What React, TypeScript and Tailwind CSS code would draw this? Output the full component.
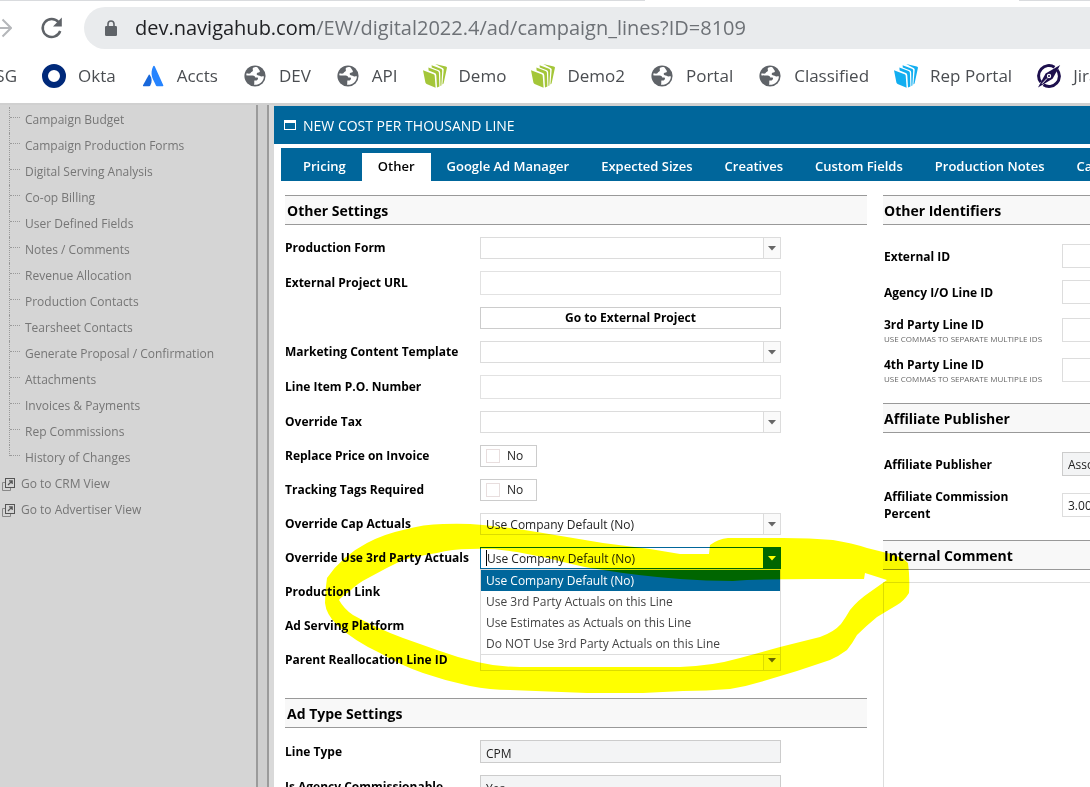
import { useState, type ReactNode } from 'react'

const ink = 'text-[#222]'

function Globe() {
  return (
    <svg viewBox="0 0 24 24" className="size-6" aria-hidden="true">
      <circle cx="12" cy="12" r="10.6" fill="#5f6368" />
      <path
        fill="#fff"
        d="M3.2 11.2 C5 11.6 7.6 11.4 9.6 11.4 C11.4 11.4 12.2 12.4 12.2 13.6 H14.4 C15.4 13.8 15.2 16 13.6 16.4 L11.4 16.6 C11 18 11.6 18.8 11 20.8 C16 21.4 20.8 17.6 20.9 12.4 C19.8 12 18.8 13 17.6 12.2 C16.4 11.4 14.8 11.8 14 10.8 C13.2 9.6 14 8.4 15.8 8.4 C17 8.4 17.2 7 16.4 6.2 L14.6 3.4 C12 2.6 10 3.4 9.6 5 C10.4 6.6 9.8 7.4 8.4 8 C7.6 8.4 8 9.4 6.8 9.6 C5.6 9.8 4.6 9.4 3.6 9.2Z"
      />
    </svg>
  )
}

function Books({ className }: { className: string }) {
  return (
    <svg viewBox="0 0 24 24" className={`size-6 ${className}`} fill="currentColor" aria-hidden="true">
      <path d="M0 6.2 L10.6 10.2 Q11.6 10.6 11.7 11.8 L12.6 23.8 L3.6 20 Q2.6 19.6 2.4 18.6Z" />
      <path d="M5.4 3.4 L14.6 7 Q15.8 7.5 15.9 8.8 L16.4 22.6 L14 23.6 L13.3 11.2 Q13.2 9.6 11.8 9 L5.6 6.4Z" />
      <path d="M8.6 1.2 L18 4.8 Q19.3 5.3 19.2 6.6 L18.4 21.4 L17.4 22 L17.2 8.4 Q17.1 6.8 15.8 6.2 L8.8 3.4Z" />
      <path d="M12.2 0 L22.8 2.4 Q24.2 2.8 23.9 4 L20.6 19.6 L19.4 20.4 L20.7 5.8 Q20.8 4.5 19.6 4Z" />
    </svg>
  )
}

function Okta() {
  return (
    <svg viewBox="0 0 24 24" className="size-6" aria-hidden="true">
      <circle cx="12" cy="12" r="9" fill="none" stroke="#00297a" strokeWidth="6" />
    </svg>
  )
}

function Atlassian() {
  return (
    <svg viewBox="0 0 24 24" className="size-6" aria-hidden="true">
      <path fill="#2684ff" d="M12.2 2.2 C12.6 1.4 13.4 1.5 13.7 2.2 L22.3 21.2 Q22.6 22.2 21.6 22.2 H16 Q15.2 22.2 14.9 21.4 C14 19 11.8 16 11 12.8 C10.1 9 10.6 5.6 12.2 2.2Z" />
      <path fill="#1868db" d="M7.8 10.8 Q8.2 10.2 8.7 10.8 C11.2 14 11.2 18 9.3 21.5 Q8.9 22.2 8.2 22.2 H2.6 Q1.6 22.2 2 21.2Z" />
    </svg>
  )
}

function Compass() {
  return (
    <svg viewBox="0 0 24 24" className="size-6" fill="none" stroke="#1d0f4d" aria-hidden="true">
      <path strokeWidth="3" d="M17.5 3.2 A10.3 10.3 0 0 0 3.8 18.2" />
      <path strokeWidth="3" d="M6.5 20.8 A10.3 10.3 0 0 0 20.2 5.8" />
      <path fill="#1d0f4d" stroke="none" d="M23.2 1 L15.6 14.8 L1 23.4 L8.6 9.4Z" />
      <path stroke="#fff" strokeWidth="1" d="M5 19.8 L10 14.5" />
      <circle cx="12" cy="12" r="2.2" fill="#fff" stroke="none" />
      <circle cx="12" cy="12" r="1" fill="#1d0f4d" stroke="none" />
    </svg>
  )
}

const bookmarks: { label: string; icon: ReactNode }[] = [
  { label: 'Okta', icon: <Okta /> },
  { label: 'Accts', icon: <Atlassian /> },
  { label: 'DEV', icon: <Globe /> },
  { label: 'API', icon: <Globe /> },
  { label: 'Demo', icon: <Books className="text-[#a4c639]" /> },
  { label: 'Demo2', icon: <Books className="text-[#a4c639]" /> },
  { label: 'Portal', icon: <Globe /> },
  { label: 'Classified', icon: <Globe /> },
  { label: 'Rep Portal', icon: <Books className="text-[#12aef0]" /> },
  { label: 'Jira', icon: <Compass /> },
]

function BrowserBar() {
  return (
    <header className="shrink-0 overflow-hidden bg-white">
      <div className="flex h-px bg-white">
        <div className="w-[645px] bg-[#d9dbde]" />
        <div className="w-[374px]" />
        <div className="flex-1 bg-[#d9dbde]" />
      </div>
      <div className="flex h-[54px] items-center">
        <button aria-label="Forward" className="w-3 shrink-0 text-[#b5b7ba]">
          <svg viewBox="0 0 12 22" className="h-[22px] w-3" fill="none" stroke="currentColor" strokeWidth="2">
            <path d="M0 11 H11 M2.5 2.5 L11 11 L2.5 19.5" />
          </svg>
        </button>
        <button aria-label="Reload" className="ml-7 shrink-0 text-[#5f6368]">
          <svg viewBox="0 0 24 24" className="size-6" fill="none" stroke="currentColor" strokeWidth="2.5">
            <path d="M20.2 15 A9 9 0 1 1 18.6 6.2" />
            <path fill="currentColor" stroke="none" d="M21.8 1.6 V10.4 H13Z" />
          </svg>
        </button>
        <div className="ml-5 flex h-[42px] flex-1 items-center rounded-l-full bg-[#e9ebed] pl-[21px]">
          <svg viewBox="0 0 12 16" className="h-4 w-3 shrink-0" aria-hidden="true">
            <path d="M3 7 V4 A3 3 0 0 1 9 4 V7" fill="none" stroke="#5f6368" strokeWidth="1.6" />
            <rect y="6" width="12" height="10" rx="1.2" fill="#5f6368" />
          </svg>
          <a href="#address" className="ml-[18px] text-[20px] whitespace-nowrap text-[#6d7176]">
            <span className="text-[#202124]">dev.navigahub.com</span>/EW/digital2022.4/ad/campaign_lines?ID=8109
          </a>
        </div>
      </div>
      <nav aria-label="Bookmarks" className="flex h-12 items-center gap-[25px] pb-1.5 text-[17px] whitespace-nowrap text-[#4a4d51]">
        <a href="#sg" className="flex w-[17px] shrink-0 justify-end">SG</a>
        {bookmarks.map((b) => (
          <a key={b.label} href={`#${b.label}`} className="flex shrink-0 items-center gap-3">
            {b.icon}
            {b.label}
          </a>
        ))}
      </nav>
    </header>
  )
}

const treeItems = [
  'Campaign Budget',
  'Campaign Production Forms',
  'Digital Serving Analysis',
  'Co-op Billing',
  'User Defined Fields',
  'Notes / Comments',
  'Revenue Allocation',
  'Production Contacts',
  'Tearsheet Contacts',
  'Generate Proposal / Confirmation',
  'Attachments',
  'Invoices & Payments',
  'Rep Commissions',
  'History of Changes',
]

function Sidebar() {
  return (
    <aside className="flex w-[274px] shrink-0 bg-[#d5d5d5] text-[12px] text-[#767676]">
      <nav aria-label="Campaign" className="min-w-0 flex-1 pt-0.5">
        <ul>
          {treeItems.map((item, i) => (
            <li key={item} className="flex h-[26px] pl-[9px]">
              <span
                className={`w-px border-l border-dotted border-[#999] ${i === treeItems.length - 1 ? 'h-[11px]' : 'h-full'}`}
              />
              <span className="h-[11px] w-2.5 border-b border-dotted border-[#999]" />
              <a href="#item" className="pl-[5px] leading-[26px] whitespace-nowrap">{item}</a>
            </li>
          ))}
        </ul>
        {['Go to CRM View', 'Go to Advertiser View'].map((item) => (
          <a key={item} href="#view" className="flex h-[26px] items-center gap-1.5 pl-0.5 whitespace-nowrap">
            <svg viewBox="0 0 13 13" className="size-[13px]" fill="none" stroke="#555" aria-hidden="true">
              <path stroke="#888" d="M3 4.5 H.5 V12.5 H8.5 V10" />
              <rect x="3.5" y=".5" width="9" height="9" />
              <path d="M6 7 L10 3 M7 2.8 H10.2 V6" strokeWidth="1.2" />
            </svg>
            {item}
          </a>
        ))}
      </nav>
      <div className="w-[13px] border-x-2 border-[#9b9b9b] bg-[#cfcfcf]" />
      <div className="w-[5px] bg-[#d9d9d9]" />
    </aside>
  )
}

function SectionTitle({ children, inset = 'px-0.5' }: { children: ReactNode; inset?: string }) {
  return (
    <h2 className={`flex h-[30px] items-center border-y border-[#999] bg-[#f8f8f8] ${inset} text-[14px] font-bold text-black`}>
      {children}
    </h2>
  )
}

function Row({ label, id, children }: { label: string; id?: string; children?: ReactNode }) {
  return (
    <div className="flex items-center">
      <label htmlFor={id} className="w-[195px] shrink-0 text-[12px] leading-[22px] font-bold whitespace-nowrap text-black">
        {label}
      </label>
      {children}
    </div>
  )
}

function Caret() {
  return (
    <svg viewBox="0 0 8 5" className="h-[5px] w-2" fill="currentColor" aria-hidden="true">
      <path d="M0 0 H8 L4 4.5Z" />
    </svg>
  )
}

function Combo({ id, value = '' }: { id: string; value?: string }) {
  return (
    <div className="relative w-[301px]">
      <select id={id} className={`block h-[22px] w-full appearance-none border border-[#dcdcdc] bg-white px-[5px] pt-0.5 text-[12px] leading-[18px] ${ink}`}>
        <option>{value}</option>
      </select>
      <span className="pointer-events-none absolute inset-y-px right-px flex w-[17px] items-center justify-center border-l border-[#dcdcdc] bg-[#fafafa] text-[#666]">
        <Caret />
      </span>
    </div>
  )
}

function TextBox({ id }: { id: string }) {
  return <input id={id} type="text" className="h-6 w-[301px] border border-[#e2e2e2] bg-white px-[5px] text-[12px]" />
}

function Toggle({ id }: { id: string }) {
  return (
    <span className={`flex h-[22px] w-[57px] items-center gap-[7px] border border-[#ccc] bg-white pl-[5px] text-[12px] ${ink}`}>
      <input id={id} type="checkbox" className="size-[14px] appearance-none border border-[#e8dede] bg-white" />
      No
    </span>
  )
}

const actualsOptions = [
  'Use Company Default (No)',
  'Use 3rd Party Actuals on this Line',
  'Use Estimates as Actuals on this Line',
  'Do NOT Use 3rd Party Actuals on this Line',
]

function OpenCombo({ id }: { id: string }) {
  const [value, setValue] = useState(actualsOptions[0])
  return (
    <div className="relative flex h-[22px] w-[301px] border border-[#00669b] bg-white">
      <span className="my-0.5 ml-[5px] w-px bg-black" />
      <input
        id={id}
        role="combobox"
        aria-expanded="true"
        aria-controls={`${id}-list`}
        readOnly
        value={value}
        className={`min-w-0 flex-1 bg-transparent pt-0.5 text-[12px] outline-none ${ink}`}
      />
      <button aria-label="Toggle options" className="flex w-[17px] items-center justify-center bg-[#00669b] text-white">
        <Caret />
      </button>
      <ul
        id={`${id}-list`}
        role="listbox"
        className="absolute top-[21px] -left-px z-10 w-[301px] border border-[#ddd] bg-white text-[12px] text-[#444]"
      >
        {actualsOptions.map((o) => (
          <li
            key={o}
            role="option"
            aria-selected={o === value}
            onClick={() => setValue(o)}
            className={`h-[21px] px-[5px] leading-[21px] whitespace-nowrap ${o === value ? 'bg-[#00669b] text-white' : ''}`}
          >
            {o}
          </li>
        ))}
      </ul>
    </div>
  )
}

function Readonly({ id, value }: { id: string; value: string }) {
  return (
    <input id={id} readOnly value={value} className={`h-[23px] w-[301px] border border-[#ccc] bg-[#f3f4f5] px-[5px] pt-[3px] text-[12px] ${ink}`} />
  )
}

function LeftColumn() {
  return (
    <div className="w-[582px] shrink-0">
      <SectionTitle>Other Settings</SectionTitle>
      <div className="mt-3 mb-[27px] flex flex-col gap-3">
        <Row label="Production Form" id="form"><Combo id="form" /></Row>
        <Row label="External Project URL" id="url"><TextBox id="url" /></Row>
        <Row label="">
          <button className="h-[22px] w-[301px] border border-[#ccc] bg-white text-[12px] leading-5 font-bold text-black">
            Go to External Project
          </button>
        </Row>
        <Row label="Marketing Content Template" id="template"><Combo id="template" /></Row>
        <Row label="Line Item P.O. Number" id="po"><TextBox id="po" /></Row>
        <Row label="Override Tax" id="tax"><Combo id="tax" /></Row>
        <Row label="Replace Price on Invoice" id="replace"><Toggle id="replace" /></Row>
        <Row label="Tracking Tags Required" id="tags"><Toggle id="tags" /></Row>
        <Row label="Override Cap Actuals" id="cap"><Combo id="cap" value="Use Company Default (No)" /></Row>
        <Row label="Override Use 3rd Party Actuals" id="actuals"><OpenCombo id="actuals" /></Row>
        <Row label="Production Link" />
        <Row label="Ad Serving Platform" />
        <Row label="Parent Reallocation Line ID" id="parent"><Combo id="parent" /></Row>
      </div>
      <SectionTitle>Ad Type Settings</SectionTitle>
      <div className="mt-3 flex flex-col gap-3">
        <Row label="Line Type" id="type"><Readonly id="type" value="CPM" /></Row>
        <Row label="Is Agency Commissionable" id="agency"><Readonly id="agency" value="Yes" /></Row>
      </div>
    </div>
  )
}

function SideRow({ label, id, hint, children }: { label: string; id: string; hint?: string; children: ReactNode }) {
  return (
    <div className="flex items-center">
      <label htmlFor={id} className="w-[179px] shrink-0 pr-8 pl-px text-[12px] leading-[17px] font-bold text-black">
        {label}
        {hint && <span className="block text-[8px] leading-[11px] font-normal whitespace-nowrap text-[#666]">{hint}</span>}
      </label>
      {children}
    </div>
  )
}

const sideInput = 'min-w-0 flex-1 border border-r-0 pl-[5px] text-[12px]'

function RightColumn() {
  const hint = 'USE COMMAS TO SEPARATE MULTIPLE IDS'
  return (
    <div className="min-w-0 flex-1">
      <SectionTitle inset="px-px">Other Identifiers</SectionTitle>
      <div className="my-[19px] flex flex-col gap-3">
        <SideRow label="External ID" id="ext"><input id="ext" className={`h-6 border-[#ddd] ${sideInput}`} /></SideRow>
        <SideRow label="Agency I/O Line ID" id="io"><input id="io" className={`h-6 border-[#ddd] ${sideInput}`} /></SideRow>
        <SideRow label="3rd Party Line ID" id="third" hint={hint}><input id="third" className={`h-6 border-[#ddd] ${sideInput}`} /></SideRow>
        <SideRow label="4th Party Line ID" id="fourth" hint={hint}><input id="fourth" className={`h-6 border-[#ddd] ${sideInput}`} /></SideRow>
      </div>
      <SectionTitle inset="px-px">Affiliate Publisher</SectionTitle>
      <div className="mt-[19px] mb-[18px] flex flex-col gap-3">
        <SideRow label="Affiliate Publisher" id="aff">
          <input id="aff" readOnly value="Asso" className={`h-6 border-[#ccc] bg-[#f3f4f5] ${sideInput} ${ink}`} />
        </SideRow>
        <SideRow label="Affiliate Commission Percent" id="pct">
          <input id="pct" readOnly value="3.00" className={`h-6 border-[#ddd] ${sideInput} ${ink}`} />
        </SideRow>
      </div>
      <SectionTitle inset="px-px">Internal Comment</SectionTitle>
      <textarea aria-label="Internal Comment" className="mt-3 block h-[240px] w-full resize-none border border-r-0 border-[#ddd]" />
    </div>
  )
}

const tabs = ['Pricing', 'Other', 'Google Ad Manager', 'Expected Sizes', 'Creatives', 'Custom Fields', 'Production Notes', 'Cat']

function Highlight() {
  return (
    <svg
      viewBox="320 515 600 185"
      className="pointer-events-none absolute top-[409px] left-[46px] z-20 h-[185px] w-[600px] mix-blend-multiply"
      aria-hidden="true"
    >
      <path
        fill="#ffff00"
        fillRule="evenodd"
        d="M325 603 Q325 590 327 578 Q342 556 367 543 Q384 534 403 530 Q424 524 443 524 Q464 523 483 525 Q514 528 543 533 L603 543 L650 549 L680 554 H709 L710 545 Q718 539 728 538 H783 Q810 538 833 540 Q852 543 867 548 L883 552 Q902 556 908 563 Q910 578 909 593 Q904 601 897 605 L877 617 Q866 626 857 635 Q852 644 847 650 Q839 656 830 660 L797 671 L767 680 Q748 686 730 689 Q706 691 683 691 L643 693 H587 L510 690 Q490 690 470 686 Q446 681 423 673 Q400 665 380 653 Q354 641 337 625 Q326 614 325 603Z
           M339 600 Q344 609 353 615 Q376 628 403 638 L437 650 Q456 657 477 662 Q498 667 520 667 H680 Q712 666 740 658 L780 647 L820 637 Q834 632 841 624 Q846 617 850 610 Q858 600 870 592 L887 580 L865 573 L864 579 L813 579 Q760 579 733 581 Q706 581 680 579 Q640 576 603 570 Q582 567 563 562 Q540 556 517 552 Q494 548 470 549 Q452 549 437 553 Q418 556 403 560 Q386 568 370 577 Q356 584 349 592 Q342 596 339 600Z"
      />
    </svg>
  )
}

export default function App() {
  return (
    <div className="flex h-screen flex-col overflow-hidden bg-white font-['Open_Sans','Noto_Sans',sans-serif]">
      <BrowserBar />
      <div className="flex min-h-0 flex-1 border-t-2 border-[#d0d0d0]">
        <Sidebar />
        <main className="relative min-w-0 flex-1 overflow-hidden border-t border-[#d0d0d0] bg-white">
          <h1 className="flex h-[38px] items-center gap-[7px] bg-[#00669b] pl-2.5 text-[14px] whitespace-nowrap text-white">
            <svg viewBox="0 0 12 10" className="h-2.5 w-3" fill="none" stroke="#fff" aria-hidden="true">
              <rect x=".5" y=".5" width="11" height="9" />
              <path d="M0 2 H12" strokeWidth="2" />
            </svg>
            NEW COST PER THOUSAND LINE
          </h1>
          <div role="tablist" className="mt-1 ml-[7px] flex h-[33px] items-end overflow-hidden bg-[#00669b] pl-1.5">
            {tabs.map((t) => (
              <button
                key={t}
                role="tab"
                aria-selected={t === 'Other'}
                className={`h-7 shrink-0 px-4 text-[13px] font-semibold whitespace-nowrap ${t === 'Other' ? 'bg-white text-black' : 'text-white'}`}
              >
                {t}
              </button>
            ))}
          </div>
          <div className="mt-[14px] ml-[11px] flex gap-4">
            <LeftColumn />
            <RightColumn />
          </div>
          <Highlight />
        </main>
      </div>
    </div>
  )
}
